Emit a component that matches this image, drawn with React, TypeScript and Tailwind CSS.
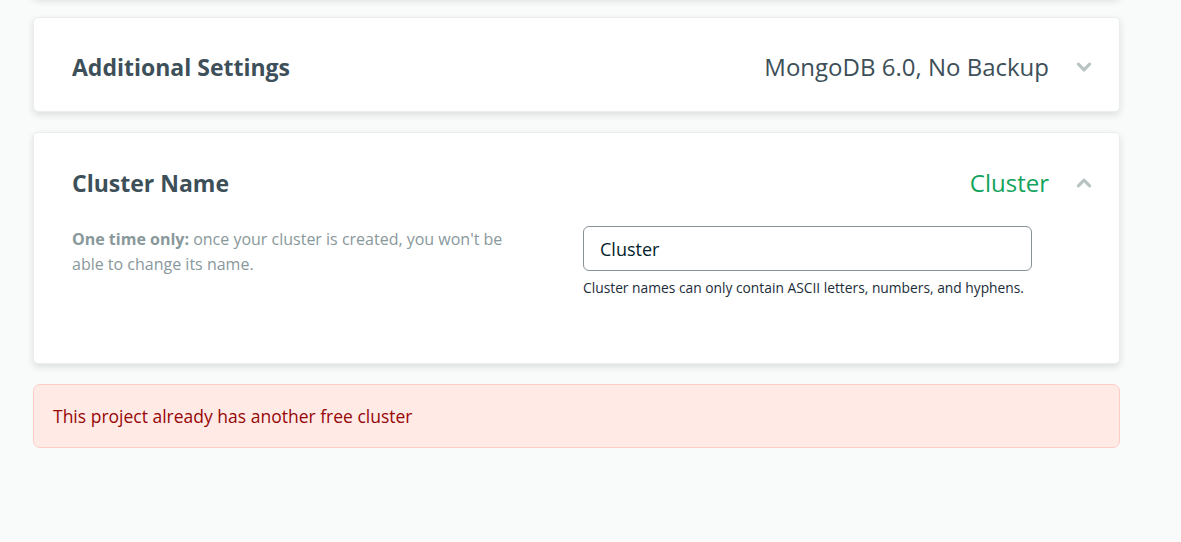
import React from "react";

const font = { fontFamily: "'Open Sans', 'Noto Sans', sans-serif" };

function Chevron({ up }: { up?: boolean }) {
  return (
    <svg width="18" height="18" viewBox="0 0 16 16" className="shrink-0">
      <path
        d={up ? "M3 10.5 L8 5.5 L13 10.5" : "M3 5.5 L8 10.5 L13 5.5"}
        fill="none"
        stroke="#b8c4c2"
        strokeWidth="2.8"
        strokeLinecap="round"
        strokeLinejoin="round"
      />
    </svg>
  );
}

function Card({ children, className = "" }: { children: React.ReactNode; className?: string }) {
  return (
    <div
      className={
        "rounded-[5px] border border-[#e9eeed] bg-white shadow-[0_3px_7px_rgba(6,22,33,0.12)] " + className
      }
    >
      {children}
    </div>
  );
}

export default function App() {
  return (
    <div className="min-h-[542px] w-full overflow-hidden bg-[#f9fbfa] text-[#3d4f58]" style={font}>
      <div className="ml-[33px] flex w-[1087px] flex-col">
        {/* previous section, scrolled just out of view */}
        <Card className="-mt-[60px] h-[58px]">
          <div />
        </Card>

        <Card className="mt-[19px] pl-[38px] pr-[26px] pt-[31px] pb-[26px]">
          <div className="flex h-[36px] items-center">
            <h2 className="text-[23px] font-bold text-[#3d4f58]">Additional Settings</h2>
            <span className="ml-auto text-[24px] text-[#3d4f58]">MongoDB 6.0, No Backup</span>
            <span className="ml-[26px]">
              <Chevron />
            </span>
          </div>
        </Card>

        <Card className="mt-[20px] h-[232px] pl-[38px] pr-[26px] pt-[32px]">
          <div className="flex h-[36px] items-center">
            <h2 className="text-[23px] font-bold text-[#3d4f58]">Cluster Name</h2>
            <span className="ml-auto text-[24px] text-[#13a35c]">Cluster</span>
            <span className="ml-[26px]">
              <Chevron up />
            </span>
          </div>
          <div className="mt-[25px] flex">
            <div className="w-[511px] shrink-0">
              <p className="w-[450px] pt-[1px] text-[16px] leading-[25px] text-[#89989b]">
                <b className="font-bold">One time only:</b> once your cluster is created, you won&apos;t be able to
                change its name.
              </p>
            </div>
            <div className="flex flex-col">
              <input
                readOnly
                value="Cluster"
                className="h-[45px] w-[449px] rounded-[6px] border border-[#889397] bg-white px-[16px] text-[18px] text-[#001e2b] outline-none"
                style={font}
              />
              <span className="mt-[7px] whitespace-nowrap text-[13.8px] text-[#1c2d38]">
                Cluster names can only contain ASCII letters, numbers, and hyphens.
              </span>
            </div>
          </div>
        </Card>

        <div className="mt-[20px] flex h-[64px] items-center rounded-[7px] border border-[#ffcdc7] bg-[#ffeae6] px-[19px] text-[17.5px] text-[#970606]">
          This project already has another free cluster
        </div>
      </div>
    </div>
  );
}
